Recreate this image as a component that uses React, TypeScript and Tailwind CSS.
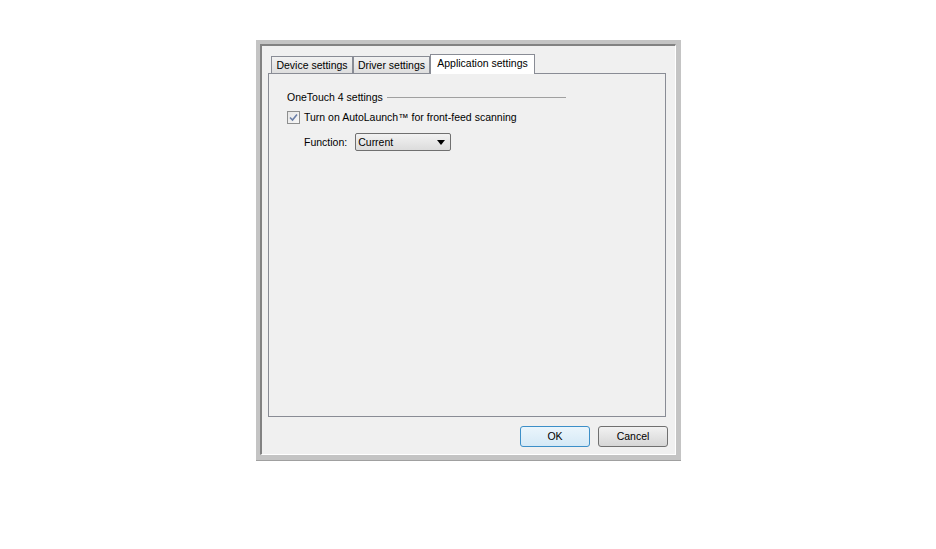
import React from "react";

const font = { fontFamily: '"Liberation Sans", Arial, sans-serif' };

const Tab = ({ label, active, w }: { label: string; active?: boolean; w: string }) =>
  active ? (
    <div className={`relative z-10 -mb-px flex h-[20px] justify-center border border-b-0 border-[#898c95] bg-white pt-[2px] text-[10.5px] leading-[13px] text-black ${w}`}>
      {label}
    </div>
  ) : (
    <div className={`flex h-[17px] items-center justify-center border border-b-0 border-[#898c95] bg-gradient-to-b from-[#f2f2f2] to-[#dedede] text-[10.5px] leading-[13px] text-black ${w}`}>
      {label}
    </div>
  );

const App = () => {
  return (
    <div className="h-[549px] w-[936px] bg-white pl-[256px] pt-[40px]" style={font}>
      {/* Dialog frame */}
      <div className="h-[421px] w-[425px] border-b border-[#a0a0a0] bg-[#c4c4c4] pl-[4px] pr-[5px] pt-[4px] pb-[5px]">
        <div className="flex h-full flex-col border-l-2 border-t-2 border-[#828282] border-b border-r border-b-white border-r-white bg-[#f0f0f0]">
          {/* Tabs */}
          <div className="flex items-end pl-[9px] pt-[8px]">
            <Tab label="Device settings" w="w-[82px]" />
            <Tab label="Driver settings" w="w-[77px]" />
            <Tab label="Application settings" w="w-[105px]" active />
          </div>

          {/* Tab panel */}
          <div className="ml-[6px] h-[344px] w-[398px] border border-[#898c95] bg-[#f0f0f0] pl-[18px] pr-[17px] pt-[17px]">
            <div className="flex w-[279px] items-center gap-[4px]">
              <span className="text-[10.5px] leading-[13px] text-black">OneTouch 4 settings</span>
              <div className="h-px flex-1 bg-[#a0a0a0]" />
            </div>

            <div className="mt-[7px] flex items-center gap-[4px]">
              <div className="flex h-[13px] w-[13px] items-center justify-center border border-[#8e8f8f] bg-gradient-to-br from-[#e6e6e6] to-[#f8f8f8]">
                <svg width="9" height="9" viewBox="0 0 9 9">
                  <path d="M1 4.5 L3.5 7 L8 1.5" fill="none" stroke="#6b7fa8" strokeWidth="1.6" />
                </svg>
              </div>
              <span className="text-[10.5px] leading-[13px] text-black">
                Turn on AutoLaunch™ for front-feed scanning
              </span>
            </div>

            <div className="mt-[9px] flex items-center gap-[8px] pl-[17px]">
              <span className="text-[10.5px] leading-[13px] text-black">Function:</span>
              <div className="flex h-[18px] w-[96px] items-center justify-between rounded-[2px] border border-[#707070] bg-gradient-to-b from-[#f2f2f2] to-[#dcdcdc] pl-[2px] pr-[5px]">
                <span className="text-[10.5px] leading-[13px] text-black">Current</span>
                <svg width="8" height="5" viewBox="0 0 8 5">
                  <path d="M0 0 H8 L4 5 Z" fill="#000" />
                </svg>
              </div>
            </div>
          </div>

          {/* Buttons */}
          <div className="mt-[9px] flex justify-end gap-[8px] pr-[7px]">
            <button className="flex h-[21px] w-[70px] items-center justify-center rounded-[3px] border border-[#3c8fc8] bg-gradient-to-b from-[#eaf5fc] to-[#d5e9f6] text-[10.5px] leading-[13px] text-black">
              OK
            </button>
            <button className="flex h-[21px] w-[70px] items-center justify-center rounded-[3px] border border-[#707070] bg-gradient-to-b from-[#f2f2f2] to-[#d6d6d6] text-[10.5px] leading-[13px] text-black">
              Cancel
            </button>
          </div>
        </div>
      </div>
    </div>
  );
};

export default App;
